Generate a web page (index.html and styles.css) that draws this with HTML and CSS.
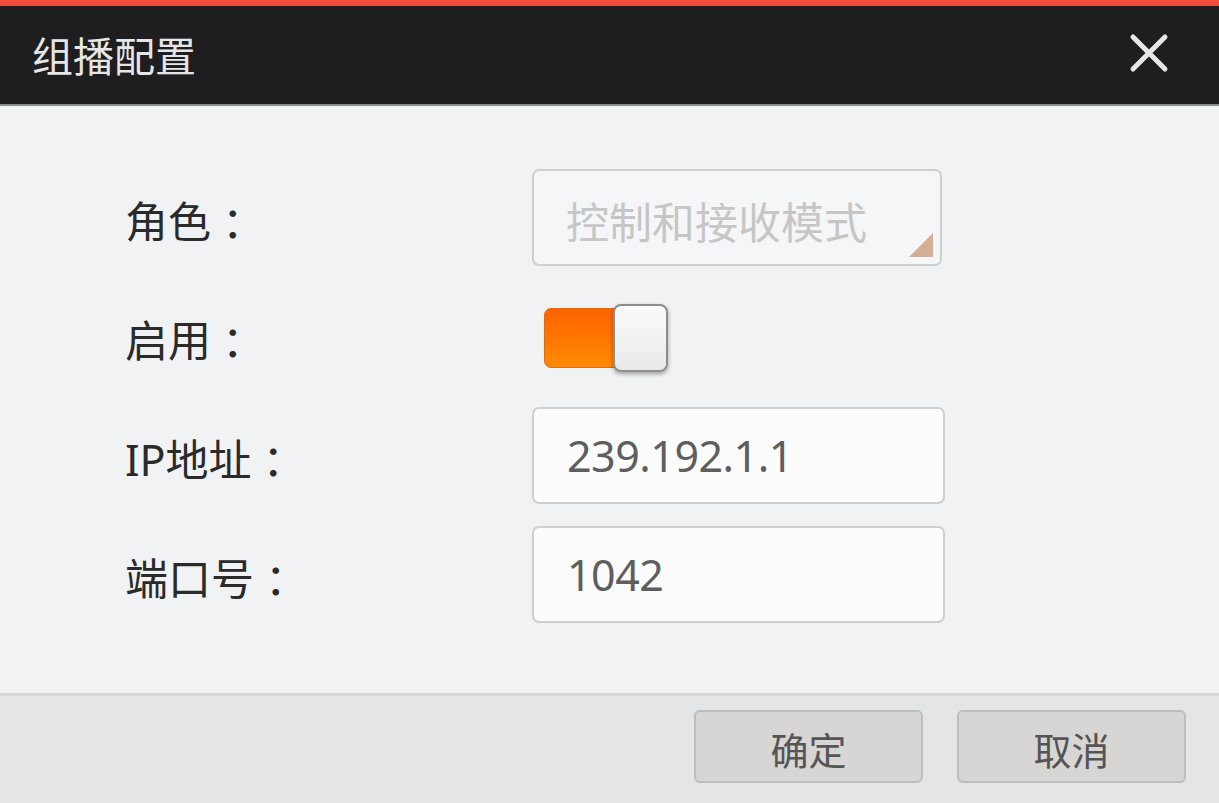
FILE: index.html
```html
<!DOCTYPE html>
<html lang="zh-CN">
<head>
<meta charset="utf-8">
<title>组播配置</title>
<link rel="stylesheet" href="styles.css">
</head>
<body>
<div class="dialog">
  <div class="topline"></div>
  <div class="header">
    <span class="title">组播配置</span>
    <svg class="close" width="40" height="40" viewBox="0 0 40 40" aria-hidden="true">
      <path d="M4 4 L36 36 M36 4 L4 36" stroke="#e6e6e6" stroke-width="5" stroke-linecap="round"/>
    </svg>
  </div>
  <div class="body">
    <div class="row">
      <div class="label">角色<span class="colon">：</span></div>
      <div class="select"><span class="placeholder">控制和接收模式</span><span class="corner"></span></div>
    </div>
    <div class="row">
      <div class="label">启用<span class="colon">：</span></div>
      <div class="toggle"><span class="track"></span><span class="knob"></span></div>
    </div>
    <div class="row">
      <div class="label">IP地址<span class="colon">：</span></div>
      <div class="input">239.192.1.1</div>
    </div>
    <div class="row">
      <div class="label">端口号<span class="colon">：</span></div>
      <div class="input">1042</div>
    </div>
  </div>
  <div class="footer">
    <button class="btn">确定</button>
    <button class="btn">取消</button>
  </div>
</div>
</body>
</html>
```

FILE: styles.css
```css
* { box-sizing: border-box; }
html, body { margin: 0; padding: 0; }
body {
  width: 1219px;
  height: 803px;
  overflow: hidden;
  font-family: "Noto Sans", "Noto Sans CJK SC", sans-serif;
  background: #f1f2f4;
}
.dialog {
  display: flex;
  flex-direction: column;
  height: 803px;
}
.topline {
  height: 6px;
  background: #f04b3c;
}
.header {
  height: 100px;
  background: #1e1e20;
  border-bottom: 2px solid #8a8b8d;
  display: flex;
  align-items: center;
  justify-content: space-between;
  padding: 0 50px 0 32px;
}
.title {
  font-family: "Noto Sans CJK SC", sans-serif;
  font-size: 41px;
  color: #e6e6e6;
  line-height: 1;
  margin-top: -2px;
}
.close { display: block; margin-top: -4px; }
.body {
  flex: 1;
  background: #f1f2f4;
  padding: 63px 0 0 125px;
  display: flex;
  flex-direction: column;
  gap: 22px;
}
.row {
  display: grid;
  grid-template-columns: 407px 413px;
  height: 97px;
  align-items: center;
}
.label {
  font-family: "Noto Sans", "Noto Sans CJK SC", sans-serif;
  font-size: 43px;
  color: #2a2a2a;
  padding-top: 4px;
}
.colon {
  font-family: "Noto Sans CJK SC", sans-serif;
  margin-left: 11px;
}
.select {
  position: relative;
  width: 410px;
  height: 97px;
  border: 2px solid #cfcfcf;
  border-radius: 7px;
  background: #f5f6f8;
  display: flex;
  align-items: center;
  padding-left: 32px;
}
.placeholder {
  font-family: "Noto Sans CJK SC", sans-serif;
  font-size: 43px;
  color: #c6c6c6;
  margin-top: 4px;
}
.corner {
  position: absolute;
  right: 7px;
  bottom: 7px;
  width: 0;
  height: 0;
  border-left: 24px solid transparent;
  border-bottom: 24px solid #d5ae98;
}
.toggle {
  position: relative;
  width: 124px;
  height: 68px;
  margin-top: 2px;
}
.track {
  position: absolute;
  left: 12px;
  top: 4px;
  width: 80px;
  height: 60px;
  border-radius: 7px;
  border: 1px solid #e06a10;
  background: linear-gradient(#ff6200, #ff8a00);
}
.knob {
  position: absolute;
  left: 81px;
  top: 0;
  width: 55px;
  height: 68px;
  border-radius: 8px;
  border: 2px solid #8d8d8d;
  background: linear-gradient(#fbfbfb, #e9e9e9);
  box-shadow: 0 2px 4px rgba(0,0,0,0.35);
}
.input {
  width: 413px;
  height: 97px;
  border: 2px solid #cfcfcf;
  border-radius: 7px;
  background: #fcfcfc;
  display: flex;
  align-items: center;
  padding-left: 33px;
  font-family: "Noto Sans", sans-serif;
  font-size: 43px;
  color: #5e5e5e;
  letter-spacing: -0.5px;
}
.footer {
  height: 110px;
  background: #e4e5e7;
  border-top: 3px solid #d3d5d6;
  display: flex;
  justify-content: flex-end;
  align-items: flex-start;
  gap: 34px;
  padding: 14px 33px 0 0;
}
.btn {
  width: 229px;
  height: 73px;
  border: 2px solid #bdbdbd;
  border-radius: 6px;
  background: #d7d6d4;
  font-family: "Noto Sans CJK SC", sans-serif;
  font-size: 38px;
  color: #555;
  padding: 0;
  padding-top: 4px;
}
```
